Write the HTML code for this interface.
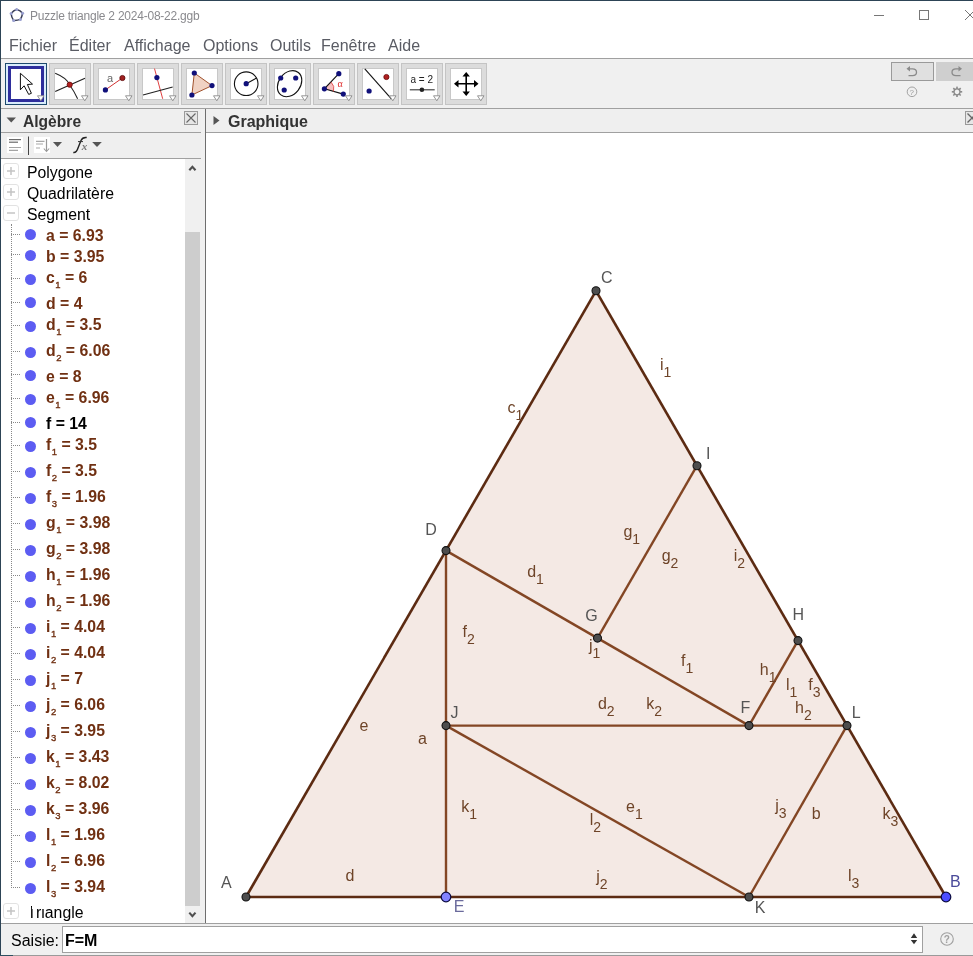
<!DOCTYPE html>
<html><head><meta charset="utf-8">
<style>
*{margin:0;padding:0;box-sizing:border-box}
html,body{width:973px;height:956px;overflow:hidden;background:#fff}
#root{position:absolute;left:0;top:0;width:973px;height:956px;will-change:transform}
body{position:relative;font-family:"Liberation Sans",sans-serif;color:#000}
.a{position:absolute;white-space:nowrap}
.menu{position:absolute;top:37px;font-size:16px;color:#5a5c64;line-height:18px}
.tb{position:absolute;top:63px;width:42px;height:42px;background:#dcdcdc;border:1px solid #c4c4c4}
.tb .in{position:absolute;left:4px;top:4px;width:32px;height:32px;background:#fff;border:1px solid #c8c8c8}
.tb svg{position:absolute;left:0;top:0}
.row{position:absolute;left:0;height:21px;width:185px}
.dot{position:absolute;left:24.5px;width:11px;height:11px;border-radius:50%;background:#5c5cf2}
.it{position:absolute;left:46px;font-weight:bold;color:#703012;font-size:15.8px;line-height:16px}
.it sub{font-size:9.5px;font-weight:normal;-webkit-text-stroke:0.35px;vertical-align:0;position:relative;top:5.3px;margin-left:0.5px;margin-right:0}
.hd{position:absolute;left:11px;width:9px;border-top:1px dotted #888}
.grp{position:absolute;left:27px;font-size:15.8px;line-height:16px}
.pbox{position:absolute;left:3px;width:16px;height:16px;border:1px solid #e2e2e2;border-radius:3px;background:#fff}
</style></head><body><div id="root">
<!-- window border -->
<div class="a" style="left:0;top:0;width:973px;height:1px;background:#2d4456"></div>
<div class="a" style="left:0;top:0;width:1px;height:956px;background:#2d4456"></div>
<!-- title -->
<svg class="a" style="left:0;top:0" width="30" height="30"><path d="M16.7 9.4 Q20.5 10.5 22.6 13.2 Q22 17 20.4 19.4 Q17 20.6 13.6 20.4 Q11.3 17 11.1 13.5 Q13.5 10.2 16.7 9.4 Z" fill="none" stroke="#3a3f58" stroke-width="1.5"/><circle cx="16.7" cy="9.4" r="1.5" fill="#9aa0d0"/><circle cx="22.6" cy="13.2" r="1.5" fill="#9aa0d0"/><circle cx="20.4" cy="19.4" r="1.5" fill="#9aa0d0"/><circle cx="13.6" cy="20.4" r="1.5" fill="#9aa0d0"/><circle cx="11.1" cy="13.5" r="1.5" fill="#9aa0d0"/></svg>
<div class="a" style="left:30px;top:8.8px;font-size:12px;letter-spacing:-0.23px;color:#8a8a8e;line-height:14px">Puzzle triangle 2 2024-08-22.ggb</div>
<div class="a" style="left:874px;top:15px;width:10px;height:1px;background:#777"></div>
<div class="a" style="left:919px;top:10px;width:10px;height:10px;border:1px solid #777"></div>
<svg class="a" style="left:964px;top:9px" width="12" height="12"><path d="M1 1 L11 11 M11 1 L1 11" stroke="#777" stroke-width="1"/></svg>
<!-- menu -->
<div class="menu" style="left:9px">Fichier</div>
<div class="menu" style="left:69px">Éditer</div>
<div class="menu" style="left:124px">Affichage</div>
<div class="menu" style="left:203px">Options</div>
<div class="menu" style="left:270px">Outils</div>
<div class="menu" style="left:321px">Fenêtre</div>
<div class="menu" style="left:388px">Aide</div>
<div class="a" style="left:1px;top:58px;width:972px;height:1px;background:#a0a0a0"></div>
<!-- toolbar -->
<div class="a" style="left:1px;top:59px;width:972px;height:49px;background:#f0f0f0"></div>
<div class="a" style="left:1px;top:108px;width:972px;height:1px;background:#a0a0a0"></div>
<div class="a" style="left:5px;top:63px;width:42px;height:42px;border:1px solid #1d4a6e;background:#d9ecfb"></div><div class="a" style="left:8px;top:66px;width:36px;height:36px;border:3px solid #2e2e9c;background:#fff"></div><svg class="a" style="left:5px;top:63px" width="42" height="42" viewBox="0 0 42 42"><path d="M15.4 10.3 L15.4 26.8 L19.1 22.8 L23.7 31.4 L26.4 30.3 L22.4 21.5 L27.5 21.1 Z" fill="#fff" stroke="#000" stroke-width="0.95" stroke-linejoin="miter"/><path d="M32.5 32.8 L39 32.8 L35.8 37.8 Z" fill="#fff" stroke="#8a8a8a" stroke-width="0.9"/></svg><div class="tb" style="left:49px"><div class="in"></div></div><svg class="a" style="left:49px;top:63px" width="42" height="42" viewBox="0 0 42 42"><path d="M6.2 10.3 Q18 15 20.7 22 Q25 28 28.6 35.8" fill="none" stroke="#222" stroke-width="1.1"/><path d="M6.2 28.6 L36 15.2" fill="none" stroke="#222" stroke-width="1.1"/><circle cx="20.7" cy="21.7" r="2.6" fill="#b02020" stroke="#6a0a0a" stroke-width="0.8"/><path d="M32.5 32.8 L39 32.8 L35.8 37.8 Z" fill="#fff" stroke="#8a8a8a" stroke-width="0.9"/></svg><div class="tb" style="left:93px"><div class="in"></div></div><svg class="a" style="left:93px;top:63px" width="42" height="42" viewBox="0 0 42 42"><text x="14" y="18.5" font-family="Liberation Sans" font-size="11" fill="#666">a</text><path d="M12.4 26.9 L29.4 15" stroke="#d03030" stroke-width="1"/><circle cx="12.4" cy="26.9" r="2.6" fill="#10107a"/><circle cx="29.4" cy="15" r="2.6" fill="#a02020" stroke="#5a0a0a" stroke-width="0.8"/><path d="M32.5 32.8 L39 32.8 L35.8 37.8 Z" fill="#fff" stroke="#8a8a8a" stroke-width="0.9"/></svg><div class="tb" style="left:137px"><div class="in"></div></div><svg class="a" style="left:137px;top:63px" width="42" height="42" viewBox="0 0 42 42"><path d="M17.5 5.6 L25.7 35.8" stroke="#e04040" stroke-width="1"/><path d="M6 32 L35.7 24" stroke="#222" stroke-width="1.1"/><circle cx="19.9" cy="14.6" r="2.6" fill="#10107a"/><path d="M32.5 32.8 L39 32.8 L35.8 37.8 Z" fill="#fff" stroke="#8a8a8a" stroke-width="0.9"/></svg><div class="tb" style="left:181px"><div class="in"></div></div><svg class="a" style="left:181px;top:63px" width="42" height="42" viewBox="0 0 42 42"><path d="M13.3 10 L31 22.6 L10.9 32 Z" fill="#f0d2c3" stroke="#a0522d" stroke-width="1"/><circle cx="13.3" cy="10" r="2.6" fill="#10107a"/><circle cx="31" cy="22.6" r="2.6" fill="#10107a"/><circle cx="10.9" cy="32" r="2.6" fill="#10107a"/><path d="M32.5 32.8 L39 32.8 L35.8 37.8 Z" fill="#fff" stroke="#8a8a8a" stroke-width="0.9"/></svg><div class="tb" style="left:225px"><div class="in"></div></div><svg class="a" style="left:225px;top:63px" width="42" height="42" viewBox="0 0 42 42"><circle cx="21.2" cy="20.7" r="11.8" fill="none" stroke="#111" stroke-width="1.1"/><path d="M21.2 20.7 L31.5 15" stroke="#111" stroke-width="1.1"/><circle cx="21.2" cy="20.7" r="2.6" fill="#10107a"/><path d="M32.5 32.8 L39 32.8 L35.8 37.8 Z" fill="#fff" stroke="#8a8a8a" stroke-width="0.9"/></svg><div class="tb" style="left:269px"><div class="in"></div></div><svg class="a" style="left:269px;top:63px" width="42" height="42" viewBox="0 0 42 42"><ellipse cx="20.6" cy="20.7" rx="14.2" ry="10.8" transform="rotate(-52 20.6 20.7)" fill="none" stroke="#111" stroke-width="1.1"/><circle cx="11.7" cy="15" r="2.6" fill="#10107a"/><circle cx="26.7" cy="15" r="2.6" fill="#10107a"/><circle cx="15.2" cy="27" r="2.6" fill="#10107a"/><path d="M32.5 32.8 L39 32.8 L35.8 37.8 Z" fill="#fff" stroke="#8a8a8a" stroke-width="0.9"/></svg><div class="tb" style="left:313px"><div class="in"></div></div><svg class="a" style="left:313px;top:63px" width="42" height="42" viewBox="0 0 42 42"><path d="M11.4 25.8 L18 19 A9.5 9.5 0 0 1 20.5 28.5 Z" fill="#f7c0c0"/><path d="M25.8 10.7 L11.4 25.8 L30.3 31.1" fill="none" stroke="#111" stroke-width="1.1"/><path d="M18 19 A9.5 9.5 0 0 1 20.5 28.5" fill="none" stroke="#e04040" stroke-width="0.8"/><text x="24.5" y="24" font-family="Liberation Serif" font-size="10" fill="#e03030">α</text><circle cx="25.8" cy="10.7" r="2.6" fill="#10107a"/><circle cx="11.4" cy="25.8" r="2.6" fill="#10107a"/><circle cx="30.3" cy="31.1" r="2.6" fill="#10107a"/><path d="M32.5 32.8 L39 32.8 L35.8 37.8 Z" fill="#fff" stroke="#8a8a8a" stroke-width="0.9"/></svg><div class="tb" style="left:357px"><div class="in"></div></div><svg class="a" style="left:357px;top:63px" width="42" height="42" viewBox="0 0 42 42"><path d="M7.8 5.9 L34.4 35.8" stroke="#111" stroke-width="1.1"/><circle cx="29.4" cy="14" r="2.6" fill="#b02020" stroke="#6a0a0a" stroke-width="0.8"/><circle cx="12.1" cy="28" r="2.6" fill="#10107a"/><path d="M32.5 32.8 L39 32.8 L35.8 37.8 Z" fill="#fff" stroke="#8a8a8a" stroke-width="0.9"/></svg><div class="tb" style="left:401px"><div class="in"></div></div><svg class="a" style="left:401px;top:63px" width="42" height="42" viewBox="0 0 42 42"><text x="9.5" y="20" font-family="Liberation Sans" font-size="10" fill="#222">a = 2</text><path d="M8.8 26.8 L33.7 26.8" stroke="#333" stroke-width="1.1"/><circle cx="20.9" cy="26.8" r="2.3" fill="#222"/><path d="M32.5 32.8 L39 32.8 L35.8 37.8 Z" fill="#fff" stroke="#8a8a8a" stroke-width="0.9"/></svg><div class="tb" style="left:445px"><div class="in"></div></div><svg class="a" style="left:445px;top:63px" width="42" height="42" viewBox="0 0 42 42"><path d="M21.2 11 L21.2 31 M11 20.7 L31.5 20.7" stroke="#000" stroke-width="1.6"/><path d="M21.2 9 L17.5 13.5 L24.9 13.5 Z M21.2 33 L17.5 28.5 L24.9 28.5 Z M9 20.7 L13.5 17 L13.5 24.4 Z M33.5 20.7 L29 17 L29 24.4 Z" fill="#000"/><path d="M32.5 32.8 L39 32.8 L35.8 37.8 Z" fill="#fff" stroke="#8a8a8a" stroke-width="0.9"/></svg><div class="a" style="left:891px;top:62px;width:43px;height:19px;background:#e0e0e0;border:1px solid #9a9a9a"></div>
<div class="a" style="left:936px;top:62px;width:37px;height:19px;background:#cfcfcf"></div>
<svg class="a" style="left:891px;top:62px" width="82" height="40">
<path d="M18 6.8 L21.5 6.8 Q25.5 6.8 25.5 10.2 Q25.5 13.6 21.5 13.6 L17.5 13.6" fill="none" stroke="#8a8a8a" stroke-width="1.3"/><path d="M15.5 6.8 L19 4 L19 9.6 Z" fill="#8a8a8a"/>
<path d="M68.5 6.8 L65 6.8 Q61 6.8 61 10.2 Q61 13.6 65 13.6 L69.5 13.6" fill="none" stroke="#8a8a8a" stroke-width="1.3"/><path d="M71 6.8 L67.5 4 L67.5 9.6 Z" fill="#8a8a8a"/>
<circle cx="21" cy="29.8" r="4.8" fill="none" stroke="#9a9a9a" stroke-width="0.9"/><text x="18.6" y="32.8" font-family="Liberation Sans" font-size="8" fill="#9a9a9a">?</text>
<g transform="translate(66,29.8)" fill="#8a8a8a"><circle r="3" fill="none" stroke="#8a8a8a" stroke-width="1.3"/>
<rect x="-0.8" y="-5.2" width="1.6" height="2.5"/><rect x="-0.8" y="2.7" width="1.6" height="2.5"/><rect x="-5.2" y="-0.8" width="2.5" height="1.6"/><rect x="2.7" y="-0.8" width="2.5" height="1.6"/>
<g transform="rotate(45)"><rect x="-0.8" y="-5.2" width="1.6" height="2.5"/><rect x="-0.8" y="2.7" width="1.6" height="2.5"/><rect x="-5.2" y="-0.8" width="2.5" height="1.6"/><rect x="2.7" y="-0.8" width="2.5" height="1.6"/></g></g>
</svg>
<!-- panels -->
<div class="a" style="left:1px;top:109px;width:200px;height:23px;background:#efefef"></div>
<div class="a" style="left:1px;top:132px;width:200px;height:1px;background:#a0a0a0"></div>
<div class="a" style="left:1px;top:133px;width:200px;height:25px;background:#efefef"></div>
<div class="a" style="left:1px;top:158px;width:200px;height:1px;background:#a0a0a0"></div>
<div class="a" style="left:201px;top:109px;width:4px;height:815px;background:#f0f0f0"></div>
<div class="a" style="left:205px;top:109px;width:1px;height:815px;background:#6e6e6e"></div>
<div class="a" style="left:206px;top:109px;width:767px;height:23px;background:#efefef"></div>
<div class="a" style="left:206px;top:132px;width:767px;height:1px;background:#a0a0a0"></div>
<svg class="a" style="left:6px;top:117px" width="11" height="7"><path d="M0.5 0.5 L10 0.5 L5.25 5.5 Z" fill="#555"/></svg>
<div class="a" style="left:23px;top:112px;font-size:15.6px;font-weight:bold;color:#333;line-height:18px;margin-top:0.6px">Algèbre</div>
<div class="a" style="left:184px;top:111px;width:14px;height:14px;border:1px solid #9a9a9a;background:#e6e6e6"></div>
<svg class="a" style="left:184px;top:111px" width="14" height="14"><path d="M2.5 2.5 L11.5 11.5 M11.5 2.5 L2.5 11.5" stroke="#666" stroke-width="1.1"/></svg>
<svg class="a" style="left:0;top:133px" width="110" height="25">
<rect x="7" y="4" width="16" height="16" fill="#fff"/>
<path d="M9 6.6 H21" stroke="#6a6a6a" stroke-width="1.2"/><path d="M9 9.2 H18" stroke="#6a6a6a" stroke-width="1.2"/>
<path d="M9 14.5 H21 M9 17.4 H18" stroke="#a4a4a4" stroke-width="1.2"/>
<path d="M28.5 3.5 V22" stroke="#444" stroke-width="1"/>
<rect x="34" y="4" width="16" height="16" fill="#fff"/>
<path d="M36 8.3 H44.5 M36 11 H43 M36 15 H40" stroke="#a8a8a8" stroke-width="1.2"/><path d="M46.5 6 V18" stroke="#999" stroke-width="1.2"/><path d="M43.8 15.5 L46.5 18.5 L49.2 15.5" fill="none" stroke="#999" stroke-width="1.1"/>
<path d="M53 9 L62 9 L57.5 14 Z" fill="#555"/>
<path d="M73.3 19.5 Q76.5 20 78 15 L81 7.5 Q82.5 4 86.7 4.5" fill="none" stroke="#222" stroke-width="1.4"/><path d="M78 8.6 H83" stroke="#333" stroke-width="1"/>
<text x="81.8" y="16.6" font-family="Liberation Serif" font-style="italic" font-weight="bold" font-size="11" fill="#777">x</text>
<path d="M92.2 9 L101.8 9 L97 14 Z" fill="#555"/>
</svg>
<div class="pbox" style="top:163px"></div><svg class="a" style="left:3px;top:163px" width="16" height="16"><path d="M8 4 V12 M4 8 H12" stroke="#c4c4c4" stroke-width="1.5"/></svg><div class="grp" style="top:165px">Polygone</div>
<div class="pbox" style="top:184px"></div><svg class="a" style="left:3px;top:184px" width="16" height="16"><path d="M8 4 V12 M4 8 H12" stroke="#c4c4c4" stroke-width="1.5"/></svg><div class="grp" style="top:186px">Quadrilatère</div>
<div class="pbox" style="top:205px"></div><svg class="a" style="left:3px;top:205px" width="16" height="16"><path d="M4 8 H12" stroke="#c4c4c4" stroke-width="1.5"/></svg><div class="grp" style="top:207px">Segment</div>
<div class="dot" style="top:228.8px"></div><div class="hd" style="top:234px"></div><div class="it" style="top:228.0px;color:#703012">a = 6.93</div>
<div class="dot" style="top:249.8px"></div><div class="hd" style="top:254px"></div><div class="it" style="top:249.0px;color:#703012">b = 3.95</div>
<div class="dot" style="top:274.0px"></div><div class="hd" style="top:278px"></div><div class="it" style="top:270.0px;color:#703012">c<sub>1</sub> = 6</div>
<div class="dot" style="top:296.8px"></div><div class="hd" style="top:302px"></div><div class="it" style="top:296.0px;color:#703012">d = 4</div>
<div class="dot" style="top:321.0px"></div><div class="hd" style="top:325px"></div><div class="it" style="top:317.0px;color:#703012">d<sub>1</sub> = 3.5</div>
<div class="dot" style="top:347.0px"></div><div class="hd" style="top:351px"></div><div class="it" style="top:343.0px;color:#703012">d<sub>2</sub> = 6.06</div>
<div class="dot" style="top:369.8px"></div><div class="hd" style="top:374px"></div><div class="it" style="top:369.0px;color:#703012">e = 8</div>
<div class="dot" style="top:394.0px"></div><div class="hd" style="top:398px"></div><div class="it" style="top:390.0px;color:#703012">e<sub>1</sub> = 6.96</div>
<div class="dot" style="top:416.8px"></div><div class="hd" style="top:422px"></div><div class="it" style="top:416.0px;color:#000">f = 14</div>
<div class="dot" style="top:441.0px"></div><div class="hd" style="top:445px"></div><div class="it" style="top:437.0px;color:#703012">f<sub>1</sub> = 3.5</div>
<div class="dot" style="top:467.0px"></div><div class="hd" style="top:471px"></div><div class="it" style="top:463.0px;color:#703012">f<sub>2</sub> = 3.5</div>
<div class="dot" style="top:493.0px"></div><div class="hd" style="top:497px"></div><div class="it" style="top:489.0px;color:#703012">f<sub>3</sub> = 1.96</div>
<div class="dot" style="top:519.0px"></div><div class="hd" style="top:523px"></div><div class="it" style="top:515.0px;color:#703012">g<sub>1</sub> = 3.98</div>
<div class="dot" style="top:545.0px"></div><div class="hd" style="top:549px"></div><div class="it" style="top:541.0px;color:#703012">g<sub>2</sub> = 3.98</div>
<div class="dot" style="top:571.0px"></div><div class="hd" style="top:575px"></div><div class="it" style="top:567.0px;color:#703012">h<sub>1</sub> = 1.96</div>
<div class="dot" style="top:597.0px"></div><div class="hd" style="top:601px"></div><div class="it" style="top:593.0px;color:#703012">h<sub>2</sub> = 1.96</div>
<div class="dot" style="top:623.0px"></div><div class="hd" style="top:627px"></div><div class="it" style="top:619.0px;color:#703012">i<sub>1</sub> = 4.04</div>
<div class="dot" style="top:649.0px"></div><div class="hd" style="top:653px"></div><div class="it" style="top:645.0px;color:#703012">i<sub>2</sub> = 4.04</div>
<div class="dot" style="top:675.0px"></div><div class="hd" style="top:679px"></div><div class="it" style="top:671.0px;color:#703012">j<sub>1</sub> = 7</div>
<div class="dot" style="top:701.0px"></div><div class="hd" style="top:705px"></div><div class="it" style="top:697.0px;color:#703012">j<sub>2</sub> = 6.06</div>
<div class="dot" style="top:727.0px"></div><div class="hd" style="top:731px"></div><div class="it" style="top:723.0px;color:#703012">j<sub>3</sub> = 3.95</div>
<div class="dot" style="top:753.0px"></div><div class="hd" style="top:757px"></div><div class="it" style="top:749.0px;color:#703012">k<sub>1</sub> = 3.43</div>
<div class="dot" style="top:779.0px"></div><div class="hd" style="top:783px"></div><div class="it" style="top:775.0px;color:#703012">k<sub>2</sub> = 8.02</div>
<div class="dot" style="top:805.0px"></div><div class="hd" style="top:809px"></div><div class="it" style="top:801.0px;color:#703012">k<sub>3</sub> = 3.96</div>
<div class="dot" style="top:831.0px"></div><div class="hd" style="top:835px"></div><div class="it" style="top:827.0px;color:#703012">l<sub>1</sub> = 1.96</div>
<div class="dot" style="top:857.0px"></div><div class="hd" style="top:861px"></div><div class="it" style="top:853.0px;color:#703012">l<sub>2</sub> = 6.96</div>
<div class="dot" style="top:883.0px"></div><div class="hd" style="top:887px"></div><div class="it" style="top:879.0px;color:#703012">l<sub>3</sub> = 3.94</div>
<div class="a" style="left:11px;top:224px;width:1px;height:664px;border-left:1px dotted #888"></div>
<div class="pbox" style="top:902.5px"></div><svg class="a" style="left:3px;top:902.5px" width="16" height="16"><path d="M8 4 V12 M4 8 H12" stroke="#c4c4c4" stroke-width="1.5"/></svg><div class="grp" style="top:904.5px">Triangle</div>
<div class="a" style="left:25px;top:903.5px;width:5.5px;height:5px;background:#fff"></div><div class="a" style="left:32.2px;top:903.5px;width:5px;height:5px;background:#fff"></div><div class="a" style="left:41.5px;top:904px;width:3.5px;height:3.8px;background:#fff"></div>
<div class="a" style="left:185px;top:159px;width:16px;height:764px;background:#f0f0f0"></div>
<div class="a" style="left:185px;top:232px;width:15px;height:674px;background:#cdcdcd"></div>
<svg class="a" style="left:185px;top:159px" width="16" height="20"><path d="M4.3 11.3 L7.4 7.8 L10.5 11.3" fill="none" stroke="#505050" stroke-width="2.1"/></svg>
<svg class="a" style="left:185px;top:903px" width="16" height="20"><path d="M4.3 9.6 L7.4 13.1 L10.5 9.6" fill="none" stroke="#505050" stroke-width="2.1"/></svg>
<svg class="a" style="left:0;top:0;will-change:transform" width="973" height="956" viewBox="0 0 973 956">
<defs><clipPath id="cv"><rect x="206" y="133" width="767" height="790"/></clipPath></defs>
<g clip-path="url(#cv)">
<path d="M246 897 L946 897 L596 290.8 Z" fill="#f4e9e4"/>
<line x1="446" y1="550.6" x2="446" y2="725.6" stroke="#834624" stroke-width="2.4"/>
<line x1="446" y1="725.6" x2="446" y2="897" stroke="#834624" stroke-width="2.4"/>
<line x1="446" y1="550.6" x2="597.5" y2="638.1" stroke="#834624" stroke-width="2.4"/>
<line x1="597.5" y1="638.1" x2="749" y2="725.6" stroke="#834624" stroke-width="2.4"/>
<line x1="597.5" y1="638.1" x2="697" y2="465.7" stroke="#834624" stroke-width="2.4"/>
<line x1="749" y1="725.6" x2="798" y2="640.6" stroke="#834624" stroke-width="2.4"/>
<line x1="446" y1="725.6" x2="749" y2="725.6" stroke="#834624" stroke-width="2.4"/>
<line x1="749" y1="725.6" x2="847" y2="725.6" stroke="#834624" stroke-width="2.4"/>
<line x1="446" y1="725.6" x2="749" y2="897" stroke="#834624" stroke-width="2.4"/>
<line x1="749" y1="897" x2="847" y2="725.6" stroke="#834624" stroke-width="2.4"/>
<line x1="246" y1="897" x2="946" y2="897" stroke="#5c2b12" stroke-width="2.6"/>
<line x1="946" y1="897" x2="596" y2="290.8" stroke="#5c2b12" stroke-width="2.6"/>
<line x1="596" y1="290.8" x2="246" y2="897" stroke="#5c2b12" stroke-width="2.6"/>
<circle cx="246" cy="897" r="4.0" fill="#4d4d4d" stroke="#111" stroke-width="1.1"/>
<circle cx="946" cy="897" r="4.8" fill="#4d4dff" stroke="#0a0a40" stroke-width="1.2"/>
<circle cx="596" cy="290.8" r="4.0" fill="#4d4d4d" stroke="#111" stroke-width="1.1"/>
<circle cx="446" cy="550.6" r="4.0" fill="#4d4d4d" stroke="#111" stroke-width="1.1"/>
<circle cx="446" cy="897" r="4.8" fill="#8282ff" stroke="#0a0a40" stroke-width="1.2"/>
<circle cx="749" cy="725.6" r="4.0" fill="#4d4d4d" stroke="#111" stroke-width="1.1"/>
<circle cx="597.5" cy="638.1" r="4.0" fill="#4d4d4d" stroke="#111" stroke-width="1.1"/>
<circle cx="798" cy="640.6" r="4.0" fill="#4d4d4d" stroke="#111" stroke-width="1.1"/>
<circle cx="697" cy="465.7" r="4.0" fill="#4d4d4d" stroke="#111" stroke-width="1.1"/>
<circle cx="446" cy="725.6" r="4.0" fill="#4d4d4d" stroke="#111" stroke-width="1.1"/>
<circle cx="749" cy="897" r="4.0" fill="#4d4d4d" stroke="#111" stroke-width="1.1"/>
<circle cx="847" cy="725.6" r="4.0" fill="#4d4d4d" stroke="#111" stroke-width="1.1"/>
<text x="601" y="282.5" font-family="Liberation Sans" font-size="16" fill="#555">C</text>
<text x="706" y="459.0" font-family="Liberation Sans" font-size="16" fill="#555">I</text>
<text x="425.3" y="534.9" font-family="Liberation Sans" font-size="16" fill="#555">D</text>
<text x="585.2" y="620.9" font-family="Liberation Sans" font-size="16" fill="#555">G</text>
<text x="792.5" y="619.8" font-family="Liberation Sans" font-size="16" fill="#555">H</text>
<text x="740.6" y="712.7" font-family="Liberation Sans" font-size="16" fill="#555">F</text>
<text x="851.7" y="717.9" font-family="Liberation Sans" font-size="16" fill="#555">L</text>
<text x="450.5" y="717.7" font-family="Liberation Sans" font-size="16" fill="#555">J</text>
<text x="221" y="887.6" font-family="Liberation Sans" font-size="16" fill="#555">A</text>
<text x="950" y="886.8" font-family="Liberation Sans" font-size="16" fill="#4a4a9a">B</text>
<text x="453.8" y="912.0" font-family="Liberation Sans" font-size="16" fill="#6a6a9c">E</text>
<text x="754.7" y="913.2" font-family="Liberation Sans" font-size="16" fill="#555">K</text>
<text x="660" y="369.6" font-family="Liberation Sans" font-size="16" fill="#6e4428">i<tspan dy="7" font-size="14">1</tspan></text>
<text x="507.6" y="412.8" font-family="Liberation Sans" font-size="16" fill="#6e4428">c<tspan dy="7" font-size="14">1</tspan></text>
<text x="623.4" y="537" font-family="Liberation Sans" font-size="16" fill="#6e4428">g<tspan dy="7" font-size="14">1</tspan></text>
<text x="661.7" y="560.5" font-family="Liberation Sans" font-size="16" fill="#6e4428">g<tspan dy="7" font-size="14">2</tspan></text>
<text x="733.8" y="560.5" font-family="Liberation Sans" font-size="16" fill="#6e4428">i<tspan dy="7" font-size="14">2</tspan></text>
<text x="527.2" y="576.9" font-family="Liberation Sans" font-size="16" fill="#6e4428">d<tspan dy="7" font-size="14">1</tspan></text>
<text x="462.6" y="637.4" font-family="Liberation Sans" font-size="16" fill="#6e4428">f<tspan dy="7" font-size="14">2</tspan></text>
<text x="589" y="651" font-family="Liberation Sans" font-size="16" fill="#6e4428">j<tspan dy="7" font-size="14">1</tspan></text>
<text x="681.1" y="666.2" font-family="Liberation Sans" font-size="16" fill="#6e4428">f<tspan dy="7" font-size="14">1</tspan></text>
<text x="759.8" y="674.5" font-family="Liberation Sans" font-size="16" fill="#6e4428">h<tspan dy="7" font-size="14">1</tspan></text>
<text x="786" y="690" font-family="Liberation Sans" font-size="16" fill="#6e4428">l<tspan dy="7" font-size="14">1</tspan></text>
<text x="808.2" y="690" font-family="Liberation Sans" font-size="16" fill="#6e4428">f<tspan dy="7" font-size="14">3</tspan></text>
<text x="597.9" y="709.4" font-family="Liberation Sans" font-size="16" fill="#6e4428">d<tspan dy="7" font-size="14">2</tspan></text>
<text x="646.3" y="709.4" font-family="Liberation Sans" font-size="16" fill="#6e4428">k<tspan dy="7" font-size="14">2</tspan></text>
<text x="795" y="712.8" font-family="Liberation Sans" font-size="16" fill="#6e4428">h<tspan dy="7" font-size="14">2</tspan></text>
<text x="359.5" y="730.6" font-family="Liberation Sans" font-size="16" fill="#6e4428">e</text>
<text x="418.1" y="744" font-family="Liberation Sans" font-size="16" fill="#6e4428">a</text>
<text x="461.3" y="812.3" font-family="Liberation Sans" font-size="16" fill="#6e4428">k<tspan dy="7" font-size="14">1</tspan></text>
<text x="626" y="811.6" font-family="Liberation Sans" font-size="16" fill="#6e4428">e<tspan dy="7" font-size="14">1</tspan></text>
<text x="589.7" y="824.9" font-family="Liberation Sans" font-size="16" fill="#6e4428">l<tspan dy="7" font-size="14">2</tspan></text>
<text x="775.2" y="811" font-family="Liberation Sans" font-size="16" fill="#6e4428">j<tspan dy="7" font-size="14">3</tspan></text>
<text x="811.7" y="818.9" font-family="Liberation Sans" font-size="16" fill="#6e4428">b</text>
<text x="882.4" y="819" font-family="Liberation Sans" font-size="16" fill="#6e4428">k<tspan dy="7" font-size="14">3</tspan></text>
<text x="345.5" y="881.4" font-family="Liberation Sans" font-size="16" fill="#6e4428">d</text>
<text x="596.2" y="882" font-family="Liberation Sans" font-size="16" fill="#6e4428">j<tspan dy="7" font-size="14">2</tspan></text>
<text x="847.9" y="880.6" font-family="Liberation Sans" font-size="16" fill="#6e4428">l<tspan dy="7" font-size="14">3</tspan></text>
</g>
<path d="M213.5 116 L219.5 120.5 L213.5 125 Z" fill="#555"/>
</svg>
<div class="a" style="left:228px;top:112px;font-size:16px;font-weight:bold;color:#333;line-height:18px;margin-top:0.6px">Graphique</div>
<div class="a" style="left:965px;top:111px;width:14px;height:14px;border:1px solid #9a9a9a;background:#e6e6e6"></div>
<svg class="a" style="left:965px;top:111px" width="14" height="14"><path d="M2.5 2.5 L11.5 11.5 M11.5 2.5 L2.5 11.5" stroke="#666" stroke-width="1.4"/></svg>
<!-- input bar -->
<div class="a" style="left:1px;top:923px;width:972px;height:1px;background:#a0a0a0"></div>
<div class="a" style="left:1px;top:924px;width:972px;height:31px;background:#f0f0f0"></div>
<div class="a" style="left:0;top:955px;width:973px;height:1px;background:#9a9a9a"></div><div class="a" style="left:0;top:955px;width:13px;height:1px;background:#2d5060"></div>
<div class="a" style="left:11px;top:932px;font-size:16px;line-height:18px">Saisie:</div>
<div class="a" style="left:62px;top:926px;width:861px;height:27px;background:#fff;border:1px solid #a0a0a0"></div>
<div class="a" style="left:65px;top:931.5px;font-size:16px;font-weight:bold;line-height:18px">F=M</div>
<svg class="a" style="left:900px;top:924px" width="73" height="31">
<path d="M14 9.2 L10.8 14 L17.2 14 Z M14 20.2 L10.8 16 L17.2 16 Z" fill="#333"/>
<circle cx="47" cy="15" r="6.3" fill="none" stroke="#a0a0a0" stroke-width="1.1"/><text x="43.8" y="19" font-family="Liberation Sans" font-weight="bold" font-size="10" fill="#a0a0a0">?</text>
</svg>
</div></body></html>
